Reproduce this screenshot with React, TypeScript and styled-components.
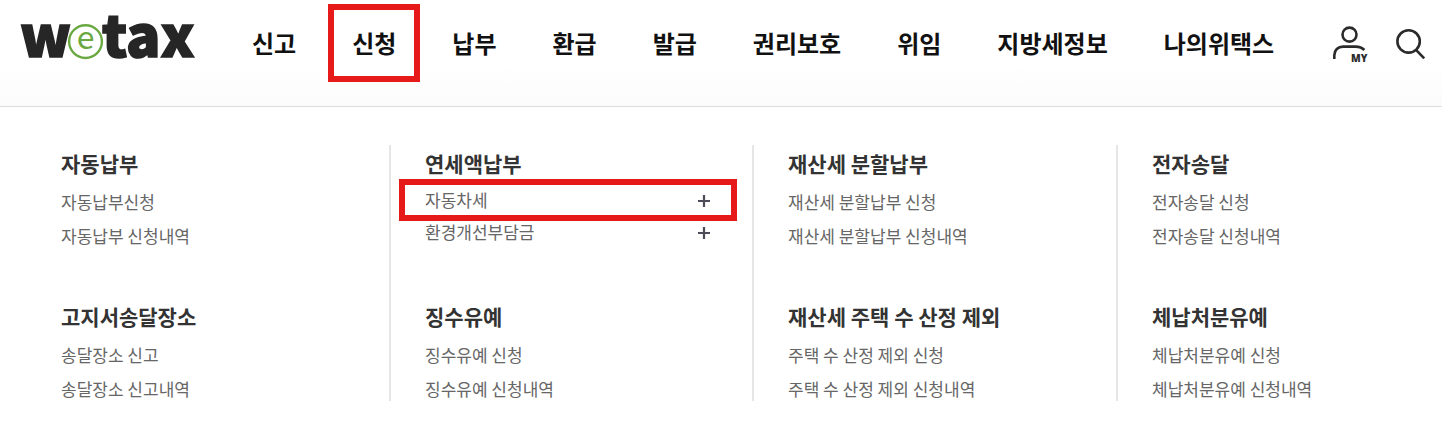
import React from "react";
import styled, { createGlobalStyle, css } from "styled-components";

const GlobalStyle = createGlobalStyle`
  * { box-sizing: border-box; }
  body {
    margin: 0;
    background: #ffffff;
    color: #333333;
    font-family: "Noto Sans CJK KR", "Noto Sans", sans-serif;
  }
  ul { list-style: none; margin: 0; padding: 0; }
  a { color: inherit; text-decoration: none; }
  h2 { margin: 0; }
`;

const Header = styled.header`
  display: flex;
  align-items: flex-start;
  height: 107px;
  padding: 0 16px 0 20px;
  border-bottom: 1px solid #dddddd;
  background: linear-gradient(#ffffff 60%, #fbfbfb);
`;

const LogoLink = styled.a`
  display: block;
  flex: none;
  width: 176px;
  height: 52px;
  margin: 12px 56px 0 0;

  svg { display: block; overflow: visible; }
`;

const NavList = styled.ul`
  display: flex;
  gap: 56px;
  padding-top: 24px;
`;

const NavLink = styled.a`
  position: relative;
  display: block;
  font-size: 24px;
  font-weight: 700;
  line-height: 38px;
  color: #111111;
  white-space: nowrap;
`;

const outline = css`
  position: absolute;
  border: 6px solid #e71a1a;
  pointer-events: none;
`;

const NavMarker = styled.span`
  ${outline}
  inset: -20px -24px;
`;

const RowMarker = styled.span`
  ${outline}
  inset: -5px -26px;
`;

const Tools = styled.div`
  display: flex;
  gap: 28px;
  margin-left: auto;
  padding-top: 24px;
`;

const IconButton = styled.button`
  display: block;
  padding: 0;
  border: 0;
  background: none;
  cursor: pointer;

  svg { display: block; overflow: visible; }
`;

const Menu = styled.nav`
  display: grid;
  grid-template-columns: 364fr 363fr 364fr 326fr;
  padding: 38px 0 26px 25px;
`;

const Column = styled.div`
  padding: 0 41px 0 34px;
  border-left: 2px solid #e6e6e6;

  &:first-child { border-color: transparent; }
`;

const Group = styled.section`
  height: 153px;
  padding-top: 3px;

  &:last-child { height: 103px; }
`;

const GroupTitle = styled.h2`
  font-size: 21px;
  font-weight: 700;
  line-height: 30px;
  color: #333333;
  white-space: nowrap;
`;

const ItemList = styled.ul<{ $compact?: boolean }>`
  padding-top: ${(p) => (p.$compact ? 6 : 7)}px;
`;

const Item = styled.li<{ $compact?: boolean }>`
  position: relative;
  display: flex;
  align-items: center;
  justify-content: space-between;
  height: ${(p) => (p.$compact ? 32 : 34)}px;
  font-size: 17px;
  line-height: 24px;
  color: #666666;
  white-space: nowrap;
`;

type MenuItem = { label: string; expandable?: boolean; marked?: boolean };
type MenuGroup = { title: string; items: MenuItem[] };

const navItems = ["신고", "신청", "납부", "환급", "발급", "권리보호", "위임", "지방세정보", "나의위택스"];

const columns: MenuGroup[][] = [
  [
    { title: "자동납부", items: [{ label: "자동납부신청" }, { label: "자동납부 신청내역" }] },
    { title: "고지서송달장소", items: [{ label: "송달장소 신고" }, { label: "송달장소 신고내역" }] },
  ],
  [
    {
      title: "연세액납부",
      items: [
        { label: "자동차세", expandable: true, marked: true },
        { label: "환경개선부담금", expandable: true },
      ],
    },
    { title: "징수유예", items: [{ label: "징수유예 신청" }, { label: "징수유예 신청내역" }] },
  ],
  [
    { title: "재산세 분할납부", items: [{ label: "재산세 분할납부 신청" }, { label: "재산세 분할납부 신청내역" }] },
    {
      title: "재산세 주택 수 산정 제외",
      items: [{ label: "주택 수 산정 제외 신청" }, { label: "주택 수 산정 제외 신청내역" }],
    },
  ],
  [
    { title: "전자송달", items: [{ label: "전자송달 신청" }, { label: "전자송달 신청내역" }] },
    { title: "체납처분유예", items: [{ label: "체납처분유예 신청" }, { label: "체납처분유예 신청내역" }] },
  ],
];

const Logo = () => (
  <svg width="176" height="52" viewBox="0 0 176 52" role="img" aria-label="wetax">
    <g
      fill="#262626"
      stroke="#262626"
      strokeWidth="1.6"
      fontFamily="'Noto Sans CJK KR', sans-serif"
      fontWeight="900"
      fontSize="57"
    >
      <text x="0" y="45">w</text>
      <text x="82" y="45">tax</text>
    </g>
    <circle cx="65.5" cy="29.6" r="16.4" fill="#ffffff" stroke="#6aa842" strokeWidth="2.4" />
    <text x="65.5" y="37" textAnchor="middle" fill="#6aa842" fontFamily="'Noto Sans CJK KR', sans-serif" fontSize="32">
      e
    </text>
  </svg>
);

const MyIcon = () => (
  <svg width="36" height="40" viewBox="0 0 36 40" fill="none" stroke="#2b2b2b" strokeWidth="2.6" aria-hidden="true">
    <circle cx="17.5" cy="10.6" r="7" />
    <path d="M2.3 35V31.5C2.3 26 6 22.6 11 22.6H23.5C27.5 22.6 30.2 23.6 32.4 26" />
    <text x="19" y="38" fill="#2b2b2b" stroke="none" fontFamily="'Open Sans', sans-serif" fontWeight="800" fontSize="10">
      MY
    </text>
  </svg>
);

const SearchIcon = () => (
  <svg width="30" height="40" viewBox="0 0 30 40" fill="none" stroke="#2b2b2b" strokeWidth="2.6" aria-hidden="true">
    <circle cx="12.6" cy="17.4" r="11.2" />
    <path d="M20 25.8L28.2 34.4" />
  </svg>
);

const PlusIcon = () => (
  <svg width="14" height="14" viewBox="0 0 14 14" fill="none" stroke="#4c4c58" strokeWidth="2.2" aria-hidden="true">
    <path d="M7 2V14M1 8H13" />
  </svg>
);

export default function App() {
  return (
    <>
      <GlobalStyle />
      <Header>
        <LogoLink href="#">
          <Logo />
        </LogoLink>
        <nav>
          <NavList>
            {navItems.map((label) => (
              <li key={label}>
                <NavLink href="#">
                  {label}
                  {label === "신청" && <NavMarker />}
                </NavLink>
              </li>
            ))}
          </NavList>
        </nav>
        <Tools>
          <IconButton type="button" aria-label="나의 메뉴">
            <MyIcon />
          </IconButton>
          <IconButton type="button" aria-label="검색">
            <SearchIcon />
          </IconButton>
        </Tools>
      </Header>
      <Menu>
        {columns.map((groups) => (
          <Column key={groups[0].title}>
            {groups.map((group) => {
              const compact = group.items.some((item) => item.expandable);
              return (
                <Group key={group.title}>
                  <GroupTitle>{group.title}</GroupTitle>
                  <ItemList $compact={compact}>
                    {group.items.map((item) => (
                      <Item key={item.label} $compact={compact}>
                        <a href="#">{item.label}</a>
                        {item.expandable && (
                          <IconButton type="button" aria-label={`${item.label} 펼치기`}>
                            <PlusIcon />
                          </IconButton>
                        )}
                        {item.marked && <RowMarker />}
                      </Item>
                    ))}
                  </ItemList>
                </Group>
              );
            })}
          </Column>
        ))}
      </Menu>
    </>
  );
}
